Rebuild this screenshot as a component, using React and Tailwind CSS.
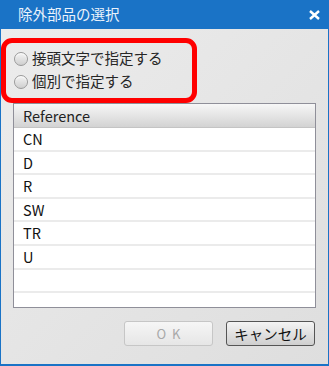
export default function App() {
  const font = { fontFamily: '"Noto Sans CJK JP", "Noto Sans", sans-serif' };
  const rows = ["CN", "D", "R", "SW", "TR", "U", "", ""];
  return (
    <div className="w-[329px] h-[366px] flex flex-col bg-[#1a73c6] text-[14px]" style={font}>
      <div className="h-[29px] flex items-center justify-between pl-[18px] pr-[9px] text-[#eaf2fb]">
        <span className="text-[14.5px] leading-none">除外部品の選択</span>
        <svg width="11" height="10" viewBox="0 0 11 10">
          <path d="M1 1 L10 9 M10 1 L1 9" stroke="#ffffff" strokeWidth="2.4" />
        </svg>
      </div>
      <div className="flex-1 ml-[1px] mr-[1px] mb-[2px] bg-gradient-to-br from-[#ececec] to-[#dedede] flex flex-col">
        <div className="mt-[9px] ml-0 w-[196px] h-[65px] border-[5px] border-[#ff0000] rounded-[11px] flex flex-col pl-[8px] pt-[7px] gap-[6px]">
          {["接頭文字で指定する", "個別で指定する"].map((t) => (
            <div key={t} className="flex items-center gap-[4px] h-[17px]">
              <span className="w-[14px] h-[14px] rounded-full border border-[#9a9a9a] bg-gradient-to-b from-[#f4f4f4] to-[#cfcfcf] shadow-[inset_0_1px_1px_rgba(255,255,255,0.9)]" />
              <span className="text-[#262626] leading-none text-[14.5px]">{t}</span>
            </div>
          ))}
        </div>
        <div className="ml-[12px] w-[303px] h-[205px] border border-[#8f8f99] bg-white flex flex-col overflow-hidden">
          <div className="h-[24px] shrink-0 bg-gradient-to-b from-[#f7f7f7] to-[#d3d3d3] border-b border-[#c4c4c4] flex items-center pl-[9px] text-[#222] text-[14.5px]">
            Reference
          </div>
          {rows.map((r, i) => (
            <div key={i} className="h-[23.6px] shrink-0 border-b-2 border-[#ebebeb] flex items-center pl-[9px] text-[#111] text-[14.5px]">
              {r}
            </div>
          ))}
        </div>
        <div className="flex justify-end gap-[13px] mt-[13px] mr-[13px]">
          <div className="w-[89px] h-[25px] rounded-[3px] border border-[#c6c6c6] bg-gradient-to-b from-[#f6f6f6] to-[#e6e6e6] flex items-center justify-center text-[#a8a8a8] tracking-[6px] pl-[6px] text-[13px]">
            OK
          </div>
          <div className="w-[89px] h-[25px] rounded-[3px] border border-[#555] bg-gradient-to-b from-[#f4f4f4] to-[#cfcfcf] flex items-center justify-center text-[#111] text-[14.5px]">
            キャンセル
          </div>
        </div>
      </div>
    </div>
  );
}
